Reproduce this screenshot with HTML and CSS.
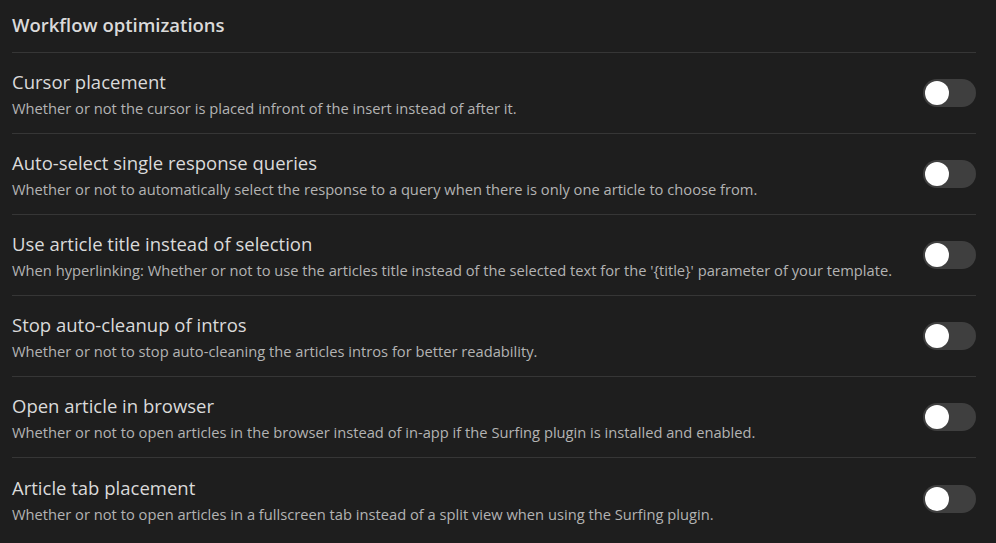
FILE: index.html
```html
<!DOCTYPE html>
<html>
<head>
<meta charset="utf-8">
<link rel="stylesheet" href="styles.css">
</head>
<body>
<div class="settings">
  <div class="heading">Workflow optimizations</div>
  <div class="item">
    <div class="info">
      <div class="name">Cursor placement</div>
      <div class="desc">Whether or not the cursor is placed infront of the insert instead of after it.</div>
    </div>
    <div class="toggle"><div class="knob"></div></div>
  </div>
  <div class="item">
    <div class="info">
      <div class="name">Auto-select single response queries</div>
      <div class="desc">Whether or not to automatically select the response to a query when there is only one article to choose from.</div>
    </div>
    <div class="toggle"><div class="knob"></div></div>
  </div>
  <div class="item">
    <div class="info">
      <div class="name">Use article title instead of selection</div>
      <div class="desc">When hyperlinking: Whether or not to use the articles title instead of the selected text for the '{title}' parameter of your template.</div>
    </div>
    <div class="toggle"><div class="knob"></div></div>
  </div>
  <div class="item">
    <div class="info">
      <div class="name">Stop auto-cleanup of intros</div>
      <div class="desc">Whether or not to stop auto-cleaning the articles intros for better readability.</div>
    </div>
    <div class="toggle"><div class="knob"></div></div>
  </div>
  <div class="item">
    <div class="info">
      <div class="name">Open article in browser</div>
      <div class="desc">Whether or not to open articles in the browser instead of in-app if the Surfing plugin is installed and enabled.</div>
    </div>
    <div class="toggle"><div class="knob"></div></div>
  </div>
  <div class="item">
    <div class="info">
      <div class="name">Article tab placement</div>
      <div class="desc">Whether or not to open articles in a fullscreen tab instead of a split view when using the Surfing plugin.</div>
    </div>
    <div class="toggle"><div class="knob"></div></div>
  </div>
</div>
</body>
</html>
```
FILE: styles.css
```css
html, body {
  margin: 0;
  padding: 0;
  background: #1e1e1e;
  font-family: "Open Sans", "Noto Sans", sans-serif;
}
.settings {
  padding: 0 20px 0 12px;
}
.heading {
  height: 53px;
  box-sizing: border-box;
  padding-top: 12px;
  font-size: 18.5px;
  font-weight: 600;
  color: #dadada;
  border-bottom: 1px solid #363636;
}
.item {
  height: 81px;
  box-sizing: border-box;
  display: flex;
  align-items: center;
  justify-content: space-between;
  border-bottom: 1px solid #363636;
}
.item:last-child {
  border-bottom: none;
}
.info {
  display: flex;
  flex-direction: column;
  gap: 4px;
  padding-top: 2px;
}
.name {
  font-size: 18.5px;
  color: #dadada;
  line-height: 24px;
}
.desc {
  font-size: 14.7px;
  color: #b3b3b3;
  line-height: 20px;
}
.toggle {
  width: 53px;
  height: 28px;
  border-radius: 14px;
  background: #3f3f3f;
  display: flex;
  align-items: center;
  padding: 0 2px;
  box-sizing: border-box;
}
.knob {
  width: 24px;
  height: 24px;
  border-radius: 50%;
  background: #fff;
}
```
